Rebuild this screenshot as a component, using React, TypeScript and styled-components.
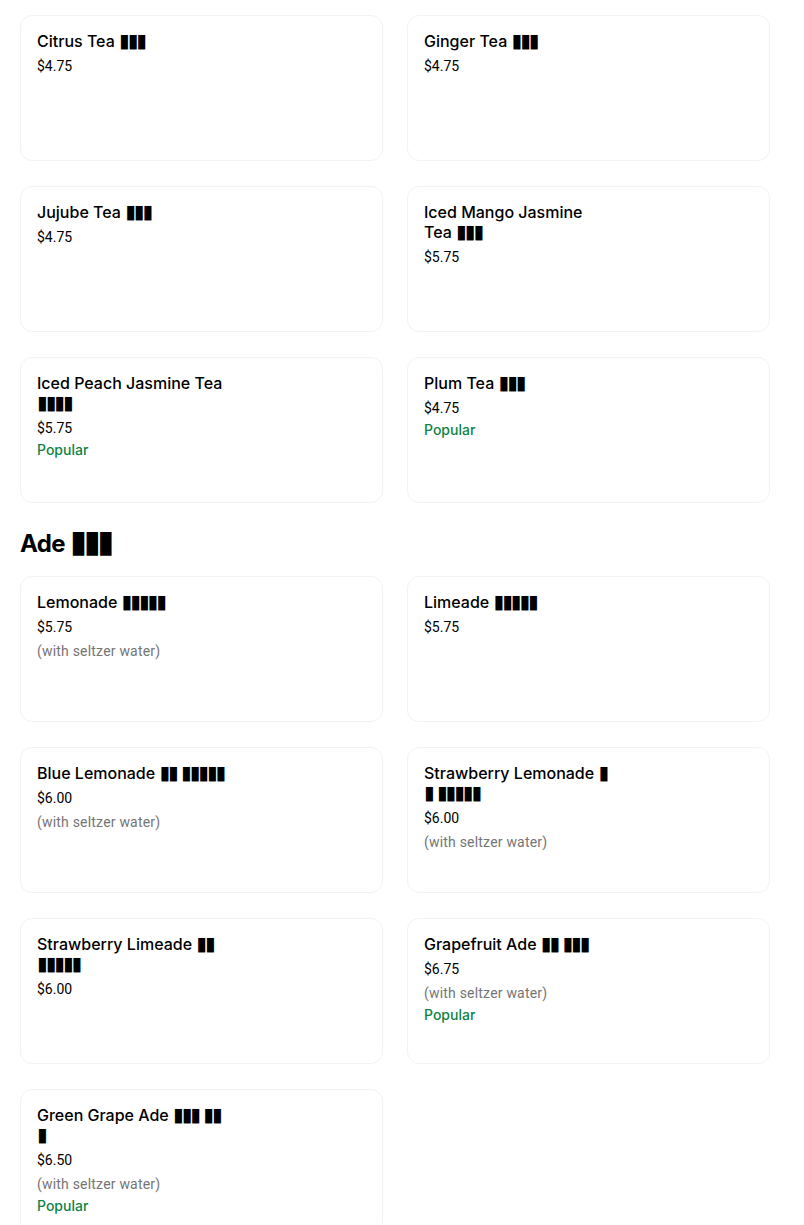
import React from "react";
import styled, { createGlobalStyle } from "styled-components";

interface IItem {
  name: string;
  tofu: string;
  price: string;
  note?: string;
  popular?: boolean;
}

const GlobalStyle = createGlobalStyle`
  body {
    margin: 0;
    background: #ffffff;
    color: #000000;
    font-family: Inter, "Noto Sans", sans-serif;
  }
`;

const Page = styled.main`
  padding: 15px 0 0 20px;
  width: 750px;
`;

const Section = styled.section`
  display: flex;
  flex-direction: column;
  & + & {
    margin-top: 25px;
  }
`;

const SectionTitle = styled.h2`
  margin: 0 0 16px;
  font-size: 24px;
  line-height: 32px;
  font-weight: 700;
  letter-spacing: -0.6px;
`;

const Grid = styled.div`
  display: grid;
  grid-template-columns: repeat(2, 363px);
  column-gap: 24px;
  row-gap: 25px;
`;

const Card = styled.div`
  box-sizing: border-box;
  height: 146px;
  padding: 15px 16px;
  border: 1px solid #f3f3f3;
  border-radius: 12px;
  background: #ffffff;
  display: flex;
  flex-direction: column;
`;

const Title = styled.div`
  max-width: 190px;
  font-size: 16px;
  line-height: 20px;
  font-weight: 500;
`;

const Tofu = styled.span<{ big?: boolean }>`
  font-family: "DejaVu Sans", sans-serif;
  font-weight: 400;
  line-height: 0;
  font-size: ${({ big }) => (big ? "31px" : "19px")};
  letter-spacing: ${({ big }) => (big ? "-3.5px" : "-1.8px")};
`;

const Price = styled.div`
  margin-top: 5px;
  font-family: Roboto, sans-serif;
  font-size: 14px;
  line-height: 20px;
  color: #000000;
`;

const Note = styled.div`
  margin-top: 4px;
  font-family: Roboto, sans-serif;
  font-size: 14px;
  line-height: 20px;
  letter-spacing: 0.2px;
  color: #757575;
`;

const Popular = styled.div`
  margin-top: 2px;
  font-size: 14px;
  line-height: 20px;
  font-weight: 500;
  color: #0e8345;
`;

const teas: IItem[] = [
  { name: "Citrus Tea", tofu: "▮▮▮", price: "$4.75" },
  { name: "Ginger Tea", tofu: "▮▮▮", price: "$4.75" },
  { name: "Jujube Tea", tofu: "▮▮▮", price: "$4.75" },
  { name: "Iced Mango Jasmine Tea", tofu: "▮▮▮", price: "$5.75" },
  { name: "Iced Peach Jasmine Tea", tofu: "▮▮▮▮", price: "$5.75", popular: true },
  { name: "Plum Tea", tofu: "▮▮▮", price: "$4.75", popular: true },
];

const ades: IItem[] = [
  { name: "Lemonade", tofu: "▮▮▮▮▮", price: "$5.75", note: "(with seltzer water)" },
  { name: "Limeade", tofu: "▮▮▮▮▮", price: "$5.75" },
  { name: "Blue Lemonade", tofu: "▮▮ ▮▮▮▮▮", price: "$6.00", note: "(with seltzer water)" },
  { name: "Strawberry Lemonade", tofu: "▮ ▮ ▮▮▮▮▮", price: "$6.00", note: "(with seltzer water)" },
  { name: "Strawberry Limeade", tofu: "▮▮ ▮▮▮▮▮", price: "$6.00" },
  { name: "Grapefruit Ade", tofu: "▮▮ ▮▮▮", price: "$6.75", note: "(with seltzer water)", popular: true },
  { name: "Green Grape Ade", tofu: "▮▮▮ ▮▮ ▮", price: "$6.50", note: "(with seltzer water)", popular: true },
];

const ItemCard = ({ item }: { item: IItem }) => (
  <Card>
    <Title>
      {item.name} <Tofu>{item.tofu}</Tofu>
    </Title>
    <Price>{item.price}</Price>
    {item.note ? <Note>{item.note}</Note> : null}
    {item.popular ? <Popular>Popular</Popular> : null}
  </Card>
);

const App = () => {
  return (
    <Page>
      <GlobalStyle />
      <Section>
        <Grid>
          {teas.map((t) => (
            <ItemCard key={t.name} item={t} />
          ))}
        </Grid>
      </Section>
      <Section>
        <SectionTitle>
          Ade <Tofu big>▮▮▮</Tofu>
        </SectionTitle>
        <Grid>
          {ades.map((a) => (
            <ItemCard key={a.name} item={a} />
          ))}
        </Grid>
      </Section>
    </Page>
  );
};

export default App;
